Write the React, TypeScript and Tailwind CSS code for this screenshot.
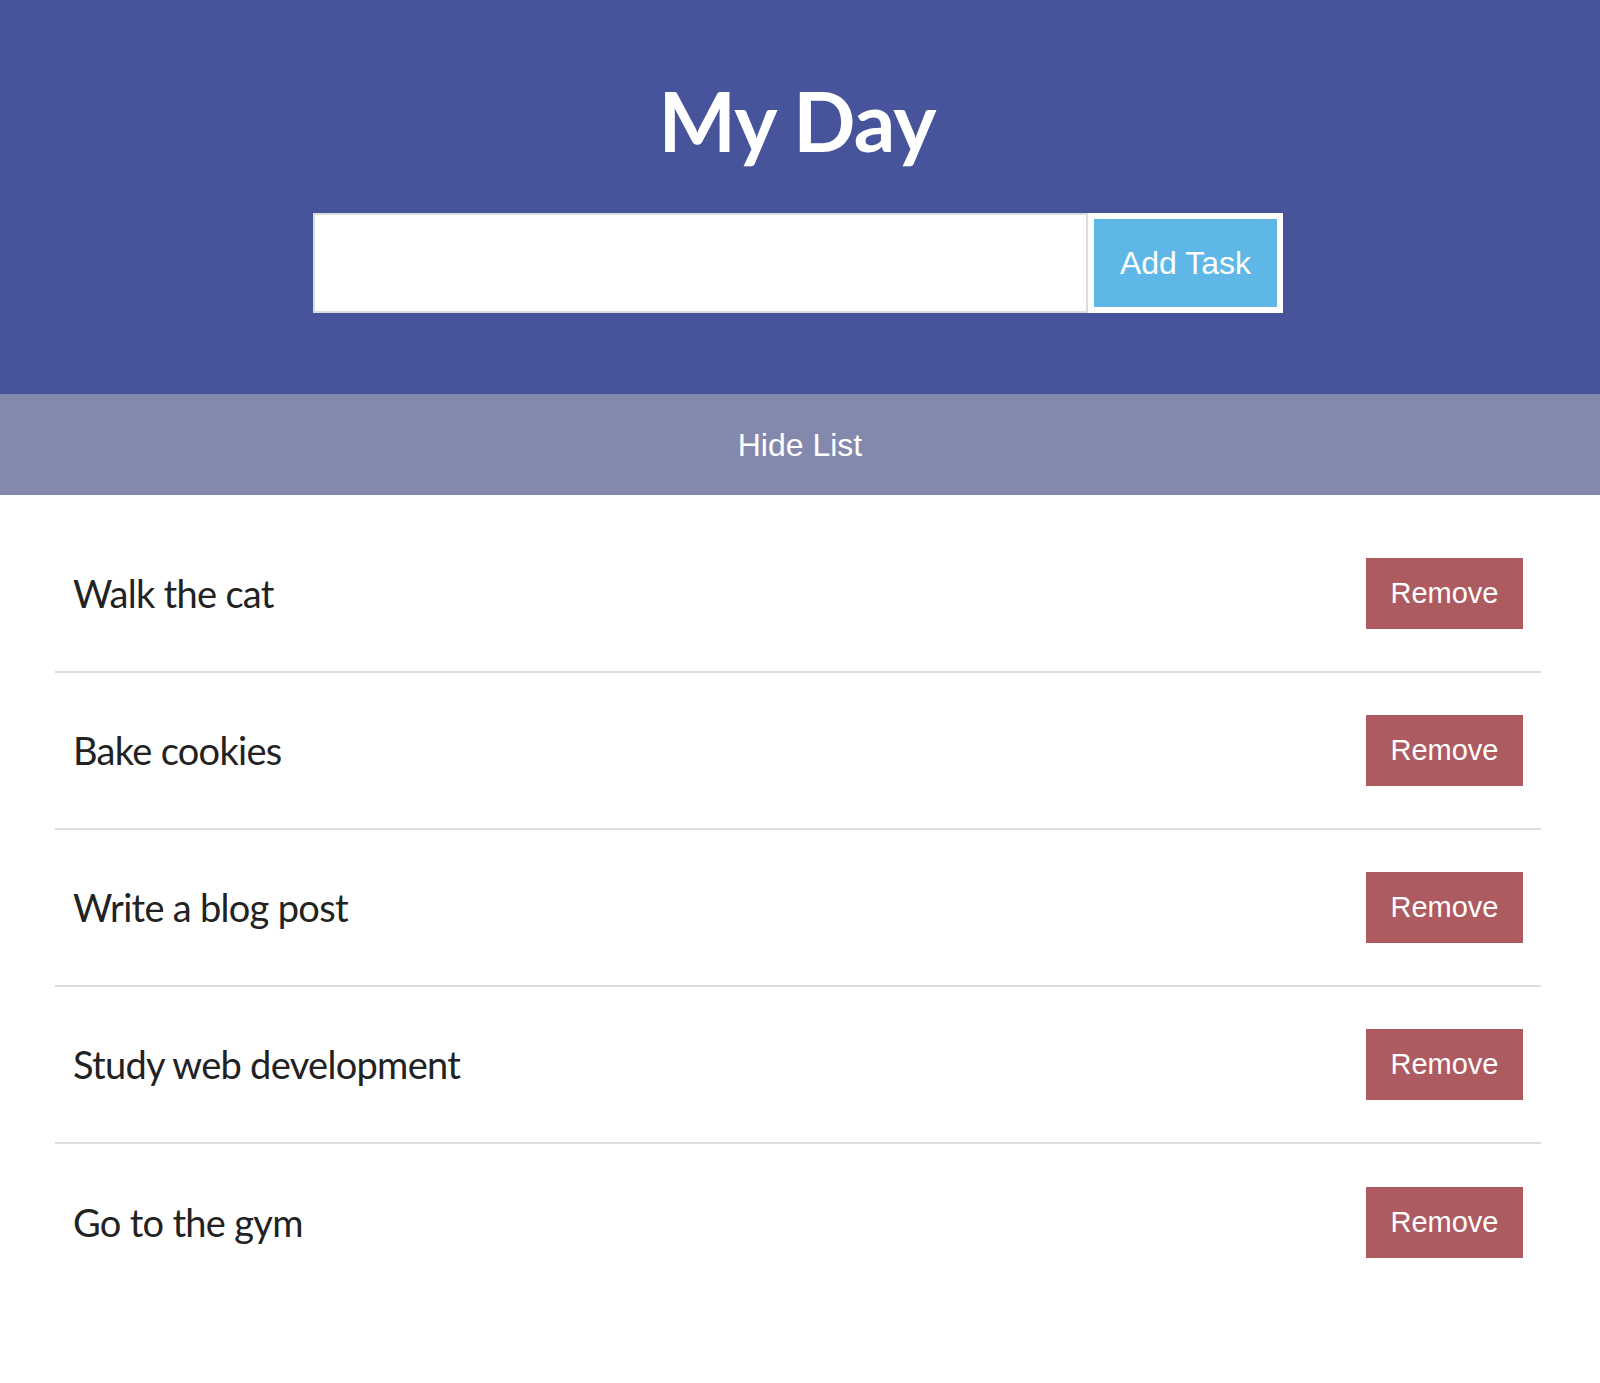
import { useState } from 'react'

const initialTasks = ['Walk the cat', 'Bake cookies', 'Write a blog post', 'Study web development', 'Go to the gym']

export default function App() {
  const [tasks, setTasks] = useState<string[]>(initialTasks)
  const [text, setText] = useState('')
  const [visible, setVisible] = useState(true)

  const addTask = () => {
    if (!text.trim()) return
    setTasks(prev => [...prev, text.trim()])
    setText('')
  }

  return (
    <div className="min-h-[1383px] bg-white">
      {/* Header */}
      <header className="bg-[#47549b] flex flex-col items-center pt-[70px] pb-[81px]">
        <h1 className="text-white font-bold text-[82px] leading-[100px] tracking-[-1px] mb-[43px] mr-[6px] font-['Lato',sans-serif]">
          My Day
        </h1>
        <div className="flex ml-[-4px]">
          <input
            value={text}
            onChange={e => setText(e.target.value)}
            className="w-[775px] h-[100px] bg-white border-2 border-[#dcdcdc] px-4 text-[30px] outline-none font-['Liberation_Sans',Arial,sans-serif]"
          />
          <button
            onClick={addTask}
            className="w-[195px] h-[100px] bg-[#5eb7e7] border-[6px] border-white text-white text-[32px] font-['Liberation_Sans',Arial,sans-serif]"
          >
            Add Task
          </button>
        </div>
      </header>

      {/* Toggle */}
      <button
        onClick={() => setVisible(v => !v)}
        className="w-full h-[101px] bg-[#8389ad] text-white text-[32px] block font-['Liberation_Sans',Arial,sans-serif]"
      >
        {visible ? 'Hide List' : 'Show List'}
      </button>

      {/* List */}
      {visible && (
        <ul className="ml-[55px] w-[1486px] pt-[21px]">
          {tasks.map((task, i) => (
            <li
              key={i}
              className={i < tasks.length - 1
                ? 'flex items-center justify-between h-[157px] px-[18px] border-b-2 border-[#dddddd]'
                : 'flex items-center justify-between h-[157px] px-[18px]'}
            >
              <span className="text-[38px] tracking-[-0.7px] text-[#222222] font-['Lato',sans-serif]">{task}</span>
              <button
                onClick={() => setTasks(prev => prev.filter((_, j) => j !== i))}
                className="w-[157px] h-[71px] bg-[#ad5b61] text-white text-[29px] font-['Liberation_Sans',Arial,sans-serif]"
              >
                Remove
              </button>
            </li>
          ))}
        </ul>
      )}
    </div>
  )
}
